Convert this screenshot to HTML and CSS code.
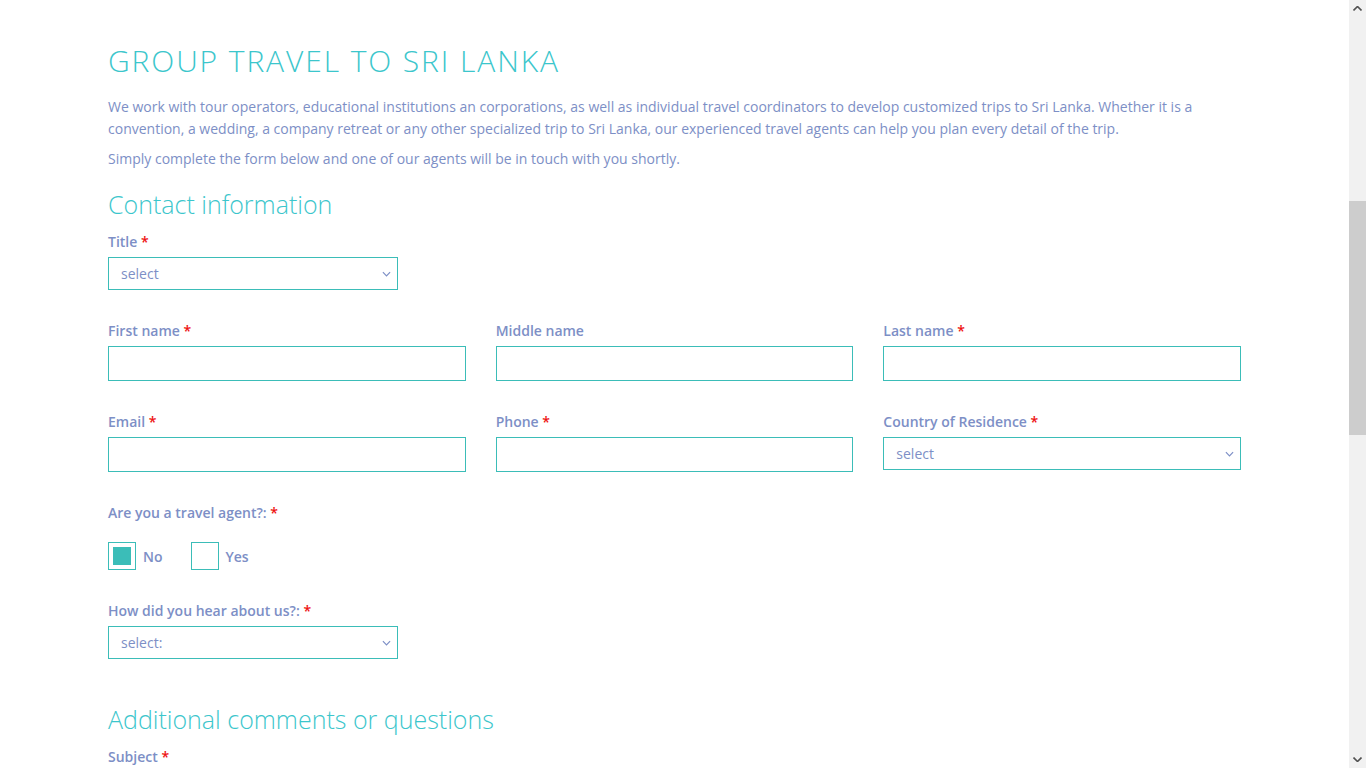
FILE: index.html
```html
<!DOCTYPE html>
<html lang="en">
<head>
<meta charset="utf-8">
<title>Group travel to Sri Lanka</title>
<link rel="stylesheet" href="styles.css">
</head>
<body>
<main class="page">
  <div class="container">
    <h1 class="page-title">GROUP TRAVEL TO SRI LANKA</h1>
    <p class="intro">We work with tour operators, educational institutions an corporations, as well as individual travel coordinators to develop customized trips to Sri Lanka. Whether it is a convention, a wedding, a company retreat or any other specialized trip to Sri Lanka, our experienced travel agents can help you plan every detail of the trip.</p>
    <p class="intro">Simply complete the form below and one of our agents will be in touch with you shortly.</p>

    <form class="form">
      <h2 class="section-title">Contact information</h2>

      <div class="row">
        <div class="field field-narrow">
          <label class="label">Title <span class="req">*</span></label>
          <div class="select"><span>select</span><svg class="chev" viewBox="0 0 10 6"><path d="M1 1l4 4 4-4"/></svg></div>
        </div>
      </div>

      <div class="row grid3">
        <div class="field">
          <label class="label">First name <span class="req">*</span></label>
          <div class="input"></div>
        </div>
        <div class="field">
          <label class="label">Middle name</label>
          <div class="input"></div>
        </div>
        <div class="field">
          <label class="label">Last name <span class="req">*</span></label>
          <div class="input"></div>
        </div>
      </div>

      <div class="row grid3">
        <div class="field">
          <label class="label">Email <span class="req">*</span></label>
          <div class="input"></div>
        </div>
        <div class="field">
          <label class="label">Phone <span class="req">*</span></label>
          <div class="input"></div>
        </div>
        <div class="field">
          <label class="label">Country of Residence <span class="req">*</span></label>
          <div class="select"><span>select</span><svg class="chev" viewBox="0 0 10 6"><path d="M1 1l4 4 4-4"/></svg></div>
        </div>
      </div>

      <div class="row">
        <div class="field">
          <label class="label">Are you a travel agent?: <span class="req">*</span></label>
          <div class="checks">
            <div class="check"><span class="box checked"></span><span class="check-text">No</span></div>
            <div class="check"><span class="box"></span><span class="check-text">Yes</span></div>
          </div>
        </div>
      </div>

      <div class="row">
        <div class="field field-narrow">
          <label class="label">How did you hear about us?: <span class="req">*</span></label>
          <div class="select"><span>select:</span><svg class="chev" viewBox="0 0 10 6"><path d="M1 1l4 4 4-4"/></svg></div>
        </div>
      </div>

      <h2 class="section-title section-title-2">Additional comments or questions</h2>
      <div class="row">
        <div class="field">
          <label class="label">Subject <span class="req">*</span></label>
          <div class="input"></div>
        </div>
      </div>
    </form>
  </div>
</main>

<aside class="scrollbar" aria-hidden="true">
  <div class="sb-arrow"><svg viewBox="0 0 9 5"><path d="M0.5 4.5l4-4 4 4"/></svg></div>
  <div class="sb-track"><div class="sb-thumb"></div></div>
  <div class="sb-arrow"><svg viewBox="0 0 9 5"><path d="M0.5 0.5l4 4 4-4"/></svg></div>
</aside>
</body>
</html>
```

FILE: styles.css
```css
html, body {
  margin: 0;
  padding: 0;
  height: 100%;
  overflow: hidden;
  background: #fff;
}

body {
  font-family: "Open Sans", "Liberation Sans", sans-serif;
  color: #7d8fc6;
}

.page {
  width: calc(100% - 17px);
  height: 100%;
}

.container {
  width: 1133px;
  margin: 0 auto;
  padding-top: 40px;
}

.page-title {
  margin: 0 0 14px;
  font-weight: 300;
  font-size: 30px;
  line-height: 42px;
  letter-spacing: 1.9px;
  color: #3cc6cc;
}

.intro {
  margin: 0 0 8px;
  font-size: 14px;
  line-height: 22px;
}

.form {
  margin-top: 16px;
}

.section-title {
  margin: 0 0 10px;
  font-weight: 300;
  font-size: 25px;
  line-height: 36px;
  color: #3cc6cc;
}

.section-title-2 {
  margin-top: 42px;
}

.row {
  margin-bottom: 31px;
}

.grid3 {
  display: grid;
  grid-template-columns: repeat(3, 1fr);
  column-gap: 30px;
}

.field-narrow {
  width: 290px;
}

.label {
  display: block;
  font-size: 14px;
  font-weight: 600;
  line-height: 20px;
  margin-bottom: 5px;
  color: #7d8fc6;
}

.req {
  color: #ee1111;
}

.input {
  box-sizing: border-box;
  height: 35px;
  border: 1px solid #3bbdb8;
  background: #fff;
}

.select {
  box-sizing: border-box;
  height: 33px;
  border: 1px solid #3bbdb8;
  background: #fff;
  display: flex;
  align-items: center;
  justify-content: space-between;
  padding: 0 6px 0 12px;
  font-size: 14px;
  color: #7d8fc6;
}

.chev {
  width: 9px;
  height: 6px;
  fill: none;
  stroke: #7d8fc6;
  stroke-width: 1.3;
}

.checks {
  display: flex;
  gap: 28px;
  margin-top: 19px;
}

.check {
  display: flex;
  align-items: center;
  gap: 7px;
}

.box {
  box-sizing: border-box;
  width: 28px;
  height: 28px;
  border: 1px solid #3bbdb8;
  padding: 4px;
  background: #fff;
}

.box.checked::after {
  content: "";
  display: block;
  width: 18px;
  height: 18px;
  background: #3bbdb8;
}

.check-text {
  font-size: 14px;
  font-weight: 600;
}

.scrollbar {
  position: fixed;
  top: 0;
  right: 0;
  width: 17px;
  height: 100%;
  background: #f1f1f1;
  display: flex;
  flex-direction: column;
}

.sb-arrow {
  height: 17px;
  display: flex;
  align-items: center;
  justify-content: center;
}

.sb-arrow svg {
  width: 9px;
  height: 5px;
  fill: none;
  stroke: #505050;
  stroke-width: 1.6;
}

.sb-track {
  flex: 1;
  padding-top: 184px;
}

.sb-thumb {
  height: 234px;
  background: #cdcdcd;
}
```
